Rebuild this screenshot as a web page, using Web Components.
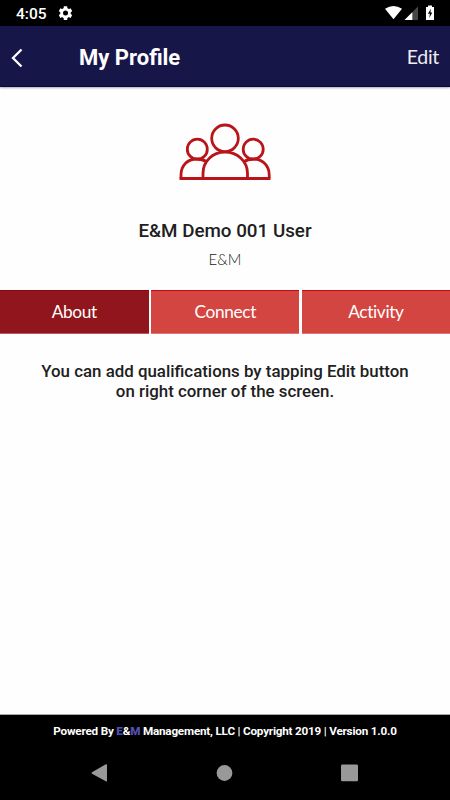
<!DOCTYPE html>
<html lang="en"><head><meta charset="utf-8"><title>My Profile</title>
<style>html,body{margin:0;height:100%}body{font-family:Roboto,sans-serif;background:#fefefe;overflow:hidden}</style></head>
<body><profile-app></profile-app>
<script>
const define=(name,html)=>customElements.define(name,class extends HTMLElement{
  constructor(){super();this.attachShadow({mode:'open'}).innerHTML=html;}
});
define('status-bar',`<style>
:host{display:flex;height:26px;background:#000;color:#fff;padding:0 15px 0 16px;box-sizing:border-box;align-items:center}
time{font:500 15.500px/26px Roboto,sans-serif;width:43px;padding-top:1px;box-sizing:border-box;height:26px;white-space:nowrap}
svg{display:block}.s{margin-left:auto}</style>
<time>4:05</time>
<svg width="14" height="26" viewBox="0 0 14 26"><g transform="translate(6.5 13.1)"><g fill="#fff"><circle r="5.3"/><rect x="-1.8" y="-6.8" width="3.6" height="13.6" rx=".5"/><rect x="-1.8" y="-6.8" width="3.6" height="13.6" rx=".5" transform="rotate(60)"/><rect x="-1.8" y="-6.8" width="3.6" height="13.6" rx=".5" transform="rotate(120)"/></g><circle r="2.5" fill="#000"/></g></svg>
<svg class="s" width="50" height="26" viewBox="385 0 50 26"><path d="M385 8.700Q393.500 3.300 402 8.700L393.500 19.300Z" fill="#fff"/><path d="M418 6.500V20H404.500Z" fill="#464646"/><path d="M412.300 12.200V20H404.500Z" fill="#fff"/><path d="M426 7h2V5.500h4V7h2v13h-8Z" fill="#fff"/><path d="M430.900 8.800l-3 5h2l-.6 4.200 3-5.500h-1.900Z" fill="#000"/></svg>`);
define('app-header',`<style>
:host{display:flex;box-sizing:border-box;height:61px;background:#171649;border-bottom:1px solid #07074a;box-shadow:0 1px 2px #0005;color:#fff;align-items:center;padding:4px 11px 0 10px;position:relative}
svg{display:block;width:69px;height:24px}h1{margin:0;font:700 22px/28px Roboto,sans-serif}
span{margin:0 0 2px auto;font:400 19.500px/28px Lato,sans-serif;letter-spacing:-.3px;color:#eee}</style>
<svg viewBox="10 46 69 24"><path d="M21.500 49.500 13 58l8.500 8.500" fill="none" stroke="#fff" stroke-width="2.300"/></svg><h1><slot></slot></h1><span>Edit</span>`);
define('profile-summary',`<style>
:host{display:flex;flex-direction:column;align-items:center;height:203px;text-align:center}
svg{display:block;margin-top:33px;flex:none}h2{font:500 18.800px/24px Roboto,sans-serif;color:#202020;margin:35px 0 0}p{font:300 15px/20px Lato,sans-serif;color:#222;margin:6px 0 0}</style>
<svg width="96" height="64" viewBox="176.500 120 96 64"><g fill="none" stroke="#b91419" stroke-width="2.800"><circle cx="224.500" cy="138.300" r="13.300"/><circle cx="196.800" cy="149.200" r="10"/><circle cx="252.700" cy="149.200" r="10"/><path d="M202.500 178V173.500C202.500 161 212 152.200 224.500 152.200S247 161 247 173.500V178M180.500 178V175C180.500 165 187.500 159 196 159Q202 159 206.500 162M243 162Q247.500 159 253 159C261.500 159 268.700 165 268.700 175V178"/><path d="M179 178.500H270"/></g></svg>
<h2>E&amp;M Demo 001 User</h2><p>E&amp;M</p>`);
define('tab-button',`<style>
:host{display:block;box-sizing:border-box;background:#d34541;border-top:1px solid #ca0710;border-bottom:1px solid #df7773;height:44px;color:#fff;text-align:center;font:400 17.300px/42px Lato,sans-serif;letter-spacing:-.35px}
:host([active]){background:#91151c;border-top-color:#8a0710;border-bottom-color:#b65c60}</style><slot></slot>`);
define('tab-strip',`<style>:host{display:grid;grid-template-columns:148.700px 148.200px 148.100px;column-gap:2.500px;height:44px}</style><slot></slot>`);
define('profile-message',`<style>:host{display:block;flex:1;padding-top:27px;text-align:center;color:#202020;font:500 16.870px/20px Roboto,sans-serif}div{white-space:nowrap}</style><div>You can add qualifications by tapping Edit button</div><div>on right corner of the screen.</div>`);
define('page-footer',`<style>:host{display:block;box-sizing:border-box;height:86px;background:#000;border-top:1px solid #aaa;color:#fff;text-align:center;font:700 11.700px/16px Roboto,sans-serif;letter-spacing:-.2px;padding-top:8px}b{color:#5150ae}p{margin:0;white-space:nowrap}
nav{display:flex;justify-content:space-between;align-items:center;padding:0 92px 0 91px;margin-top:25px}svg{display:block}</style><p>Powered By <b>E</b>&amp;<b>M</b> Management, LLC | Copyright 2019 | Version 1.0.0</p>
<nav><svg width="17" height="18"><path d="M1 8.200 14.800.3Q16 0 16 1V16.500Q16 17.800 14.800 17.200L1 9.700Q0 9 1 8.200Z" fill="#999"/></svg><svg width="17" height="18"><circle cx="8.500" cy="9" r="7.900" fill="#999"/></svg><svg width="17" height="18"><rect y=".5" width="17" height="16.700" rx="1.300" fill="#999"/></svg></nav>`);
define('profile-app',`<style>:host{display:flex;flex-direction:column;width:450px;height:800px;background:#fefefe}</style>
<status-bar></status-bar><app-header>My Profile</app-header><profile-summary></profile-summary>
<tab-strip><tab-button active>About</tab-button><tab-button>Connect</tab-button><tab-button>Activity</tab-button></tab-strip><profile-message></profile-message><page-footer></page-footer>`);
</script></body></html>
